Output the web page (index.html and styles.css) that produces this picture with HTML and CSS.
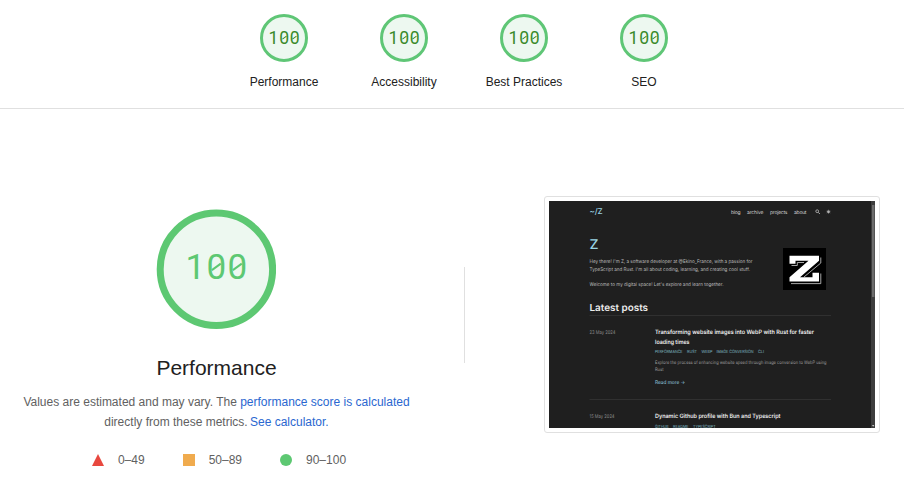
FILE: index.html
```html
<!DOCTYPE html>
<html lang="en">
<head>
<meta charset="utf-8">
<title>Report</title>
<link rel="stylesheet" href="styles.css">
</head>
<body>
<header class="scores">
  <div class="gauge"><div class="ring"><span class="num">1<i>0</i><i>0</i></span></div><span class="label">Performance</span></div>
  <div class="gauge"><div class="ring"><span class="num">1<i>0</i><i>0</i></span></div><span class="label">Accessibility</span></div>
  <div class="gauge"><div class="ring"><span class="num">1<i>0</i><i>0</i></span></div><span class="label">Best Practices</span></div>
  <div class="gauge"><div class="ring"><span class="num">1<i>0</i><i>0</i></span></div><span class="label">SEO</span></div>
</header>
<main class="category">
  <section class="summary">
    <div class="ring-large">
      <svg viewBox="0 0 120 120" width="120" height="120"><circle cx="60.4" cy="60.3" r="56.2" fill="#edf8f0" stroke="#5dc872" stroke-width="7"/></svg>
      <span class="num">1<i>0</i><i>0</i></span>
    </div>
    <h1>Performance</h1>
    <p>Values are estimated and may vary. The <a>performance score is calculated</a><br>directly from these metrics. <a class="calc">See calculator.</a></p>
    <div class="scale">
      <span class="range"><svg width="12" height="12"><path d="M6 0L12 12H0Z" fill="#e8483f"/></svg>0–49</span>
      <span class="range"><svg width="12" height="12"><path d="M0 0H12V12H0Z" fill="#f0ab4e"/></svg>50–89</span>
      <span class="range"><svg width="12" height="12"><circle cx="6" cy="6" r="6" fill="#5dc872"/></svg>90–100</span>
    </div>
  </section>
  <div class="divider"></div>
  <figure class="shot">
    <svg viewBox="549 201 326 227" width="326" height="227">
      <rect x="549" y="201" width="326" height="227" fill="#1f1f1f"/>
      <rect x="871" y="201" width="4" height="227" fill="#3d3d3d"/>
      <rect x="872" y="205" width="2.5" height="92" fill="#6c6c6c"/>
      <path d="M872 425h2.4l-1.2 1.8z" fill="#ccc"/>
      <g class="cyan">
        <text x="589.5" y="214.3" font-size="8" textLength="13" font-weight="500">~/Z</text>
        <text x="589.5" y="249.3" font-size="13.5" textLength="9" lengthAdjust="spacingAndGlyphs" font-weight="500">Z</text>
      </g>
      <g class="nav" font-size="5">
        <text x="731" y="213.6" textLength="9.5">blog</text>
        <text x="747" y="213.6" textLength="16.5">archive</text>
        <text x="770" y="213.6" textLength="17.5">projects</text>
        <text x="794" y="213.6" textLength="12.5">about</text>
      </g>
      <circle cx="817.2" cy="211.2" r="1.4" fill="none" stroke="#ccc" stroke-width=".7"/>
      <path d="M818.2 212.3l1.7 1.7" stroke="#ccc" stroke-width=".8"/>
      <circle cx="828.5" cy="211.8" r="1.2" fill="#ccc"/>
      <path d="M828.5 209.6v4.4M826.3 211.8h4.4M827 210.3l3 3M830 210.3l-3 3" stroke="#aaa" stroke-width=".4"/>
      <g class="body" font-size="5">
        <text x="589.5" y="262.6" textLength="163" lengthAdjust="spacingAndGlyphs">Hey there! I'm Z, a software developer at @Ekino_France, with a passion for</text>
        <text x="589.5" y="271.3" textLength="160.5" lengthAdjust="spacingAndGlyphs">TypeScript and Rust. I'm all about coding, learning, and creating cool stuff.</text>
        <text x="589.5" y="285.7" textLength="134" lengthAdjust="spacingAndGlyphs">Welcome to my digital space! Let's explore and learn together.</text>
      </g>
      <rect x="783" y="248" width="43" height="42" fill="#000"/>
      <path d="M791.5 265.5H797.3V262.5H804M820.8 257.5V263L804 277M820.8 273.500V283.600H791" fill="none" stroke="#b8b8b8" stroke-width=".9"/>
      <path d="M789.5 255.8H819V260.8L800 277.200H812.5V272.800H819V281.500H789.5V277.300L808.5 260.800H795.5V263.800H789.5Z" fill="#fff"/>
      <text class="white" x="589.5" y="311" font-size="9.8" textLength="58.5" lengthAdjust="spacingAndGlyphs" font-weight="600">Latest posts</text>
      <path d="M589.5 315.5H831M589.5 399.5H831" stroke="#303030" stroke-width="1"/>
      <g class="date" font-size="5">
        <text x="589.5" y="334" textLength="26" lengthAdjust="spacingAndGlyphs">23 May 2024</text>
        <text x="589.5" y="417.7" textLength="25" lengthAdjust="spacingAndGlyphs">15 May 2024</text>
      </g>
      <g class="white" font-size="5.9" font-weight="600">
        <text x="655" y="334.4" textLength="159" lengthAdjust="spacingAndGlyphs">Transforming website images into WebP with Rust for faster</text>
        <text x="655" y="343.8" textLength="34.5" lengthAdjust="spacingAndGlyphs">loading times</text>
        <text x="655" y="418.2" textLength="125.5" lengthAdjust="spacingAndGlyphs">Dynamic Github profile with Bun and Typescript</text>
      </g>
      <g class="tag" font-size="4.3">
        <text x="655" y="353.3" textLength="27.5" lengthAdjust="spacingAndGlyphs">PERFORMANCE</text>
        <text x="687" y="353.3" textLength="10" lengthAdjust="spacingAndGlyphs">RUST</text>
        <text x="701.5" y="353.3" textLength="11" lengthAdjust="spacingAndGlyphs">WEBP</text>
        <text x="716.5" y="353.3" textLength="37" lengthAdjust="spacingAndGlyphs">IMAGE CONVERSION</text>
        <text x="758" y="353.3" textLength="6" lengthAdjust="spacingAndGlyphs">CLI</text>
        <text x="655" y="427.8" textLength="13.5" lengthAdjust="spacingAndGlyphs">GITHUB</text>
        <text x="673" y="427.8" textLength="15.5" lengthAdjust="spacingAndGlyphs">README</text>
        <text x="693" y="427.8" textLength="22.5" lengthAdjust="spacingAndGlyphs">TYPESCRIPT</text>
      </g>
      <g class="dim" font-size="4.7">
        <text x="655" y="364" textLength="171.5" lengthAdjust="spacingAndGlyphs">Explore the process of enhancing website speed through image conversion to WebP using</text>
        <text x="655" y="371.3" textLength="8.5" lengthAdjust="spacingAndGlyphs">Rust</text>
      </g>
      <text class="cyan" x="655" y="384.3" font-size="5.1" textLength="30" lengthAdjust="spacingAndGlyphs">Read more →</text>
    </svg>
  </figure>
</main>
</body>
</html>
```
FILE: styles.css
```css
* { box-sizing: border-box; }
body {
  margin: 0;
  height: 483px;
  overflow: hidden;
  background: #fff;
  color: #212121;
  font: 12px/20px "Liberation Sans", Arial, sans-serif;
}
.scores {
  display: flex;
  justify-content: center;
  height: 109px;
  padding: 14px 0 0 24px;
  border-bottom: 1px solid #e0e0e0;
}
.gauge {
  display: flex;
  flex-direction: column;
  align-items: center;
  gap: 10px;
  width: 120px;
}
.ring {
  display: flex;
  align-items: center;
  justify-content: center;
  width: 48px;
  height: 48px;
  border: 3px solid #5fc676;
  border-radius: 50%;
  background: #edf8f0;
  color: #3a8a2a;
}
.num {
  display: flex;
  margin-left: 1px;
  font: 400 17.6px/20px Roboto, sans-serif;
}
.num, .num i { font-style: normal; letter-spacing: 0.04em; }
.num i { position: relative; }
.num i::after {
  content: "";
  position: absolute;
  left: 0.14em;
  top: 47%;
  width: 0.3em;
  height: 0.07em;
  background: currentColor;
  transform: rotate(-36deg);
}
.category { display: flex; }
.summary {
  display: flex;
  flex-direction: column;
  align-items: center;
  width: 433px;
  padding-top: 100px;
}
.ring-large {
  display: grid;
  place-items: center;
  width: 120px;
  height: 120px;
  margin-right: 1px;
  color: #5dc872;
}
.ring-large > * { grid-area: 1 / 1; }
.ring-large .num {
  font-weight: 400;
  font-size: 35px;
  line-height: 40px;
  margin: -3px 0 0 2px;
}
h1 {
  margin: 27px 0 12px;
  font-weight: 400;
  font-size: 21px;
  line-height: 24px;
}
p {
  margin: 0;
  text-align: center;
  color: #616161;
}
a { color: #2a67d0; }
.calc { margin-left: -1px; }
.scale {
  display: flex;
  gap: 38px;
  margin: 18px 0 0 5px;
  color: #616161;
}
.range {
  display: flex;
  align-items: center;
  gap: 14px;
}
.divider {
  width: 1px;
  height: 96px;
  margin: 158px 0 0 31px;
  background: #e0e0e0;
}
.shot {
  width: 336px;
  height: 237px;
  margin: 87px 0 0 79px;
  padding: 4px;
  border: 1px solid #e0e0e0;
  border-radius: 3px;
}
.shot svg { display: block; }
.shot text { font-family: Inter, sans-serif; text-rendering: geometricPrecision; }
.cyan { fill: #9ad4e4; }
.nav { fill: #cfcfcf; }
.body { fill: #bcbcbc; }
.white { fill: #ececec; }
.date { fill: #8c8c8c; }
.tag { fill: #7fb8c2; }
.dim { fill: #9c9c9c; }
```
